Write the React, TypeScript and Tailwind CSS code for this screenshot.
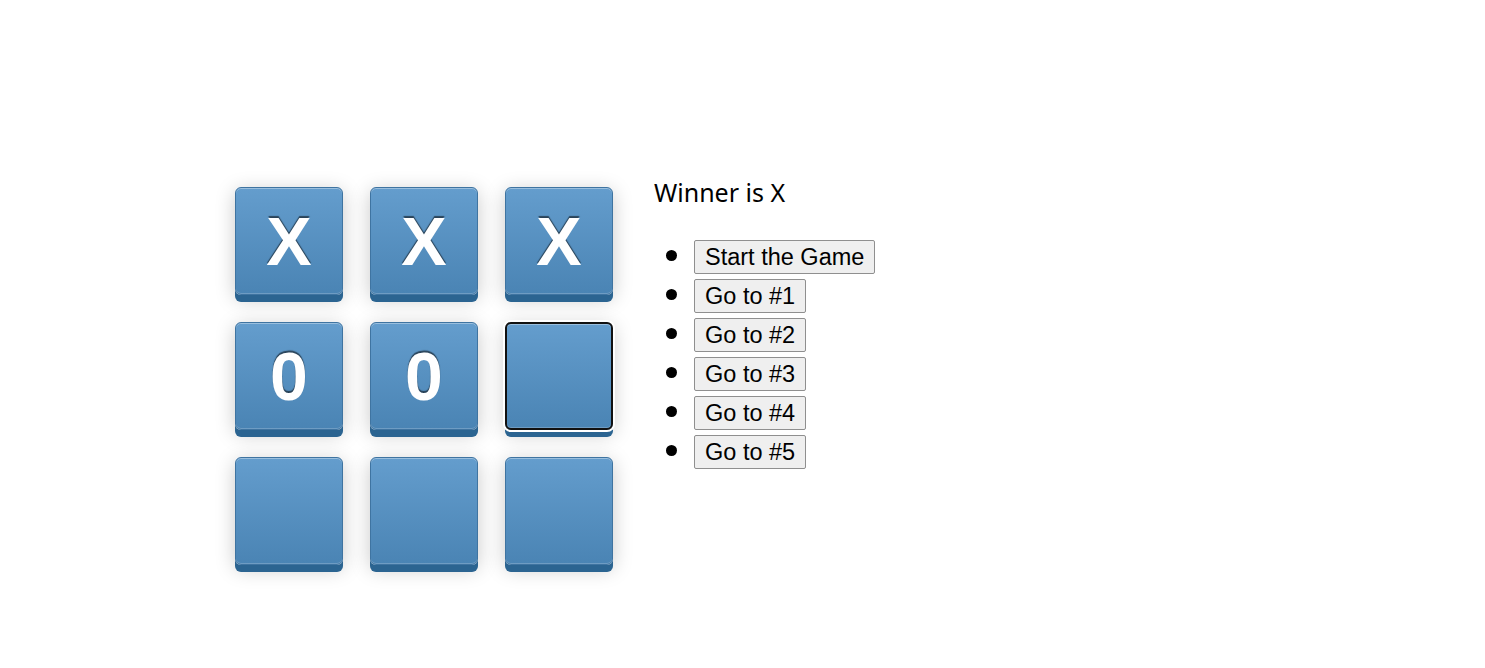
import React from "react";

const squares: (string | null)[] = ["X", "X", "X", "0", "0", null, null, null, null];
const moves = ["Start the Game", "Go to #1", "Go to #2", "Go to #3", "Go to #4", "Go to #5"];

const Square: React.FC<{ value: string | null; focused?: boolean }> = ({ value, focused }) => (
  <button
    className={
      "flex h-[108px] w-[108px] items-center justify-center rounded-[6px] bg-gradient-to-b from-[#649dcd] to-[#4a84b4] font-['Liberation_Sans',Arial,sans-serif] text-[68px] leading-none font-bold text-white [text-shadow:0_-2px_1px_rgba(0,0,0,0.55)] shadow-[inset_0_1px_0_rgba(255,255,255,0.35),inset_0_-1px_0_rgba(255,255,255,0.2),0_7px_0_#2b6491,0_4px_20px_rgba(0,0,0,0.22)]" +
      (focused ? " border-2 border-[#111] ring-2 ring-white" : " border border-[#3f74a1]")
    }
  >
    {value}
  </button>
);

export default function App() {
  return (
    <main className="flex min-h-screen items-start gap-[41px] bg-white pt-[187px] pl-[235px]">
      <div className="grid grid-cols-3 gap-x-[27px] gap-y-[27px]">
        {squares.map((v, i) => (
          <Square key={i} value={v} focused={i === 5} />
        ))}
      </div>

      <div className="-mt-[11px] font-['Noto_Sans','Open_Sans',sans-serif] text-black">
        <div className="text-[25px] leading-[32px]">Winner is X</div>
        <ul className="mt-[30px] flex list-disc flex-col gap-[5px] pl-[40px] text-[23px] marker:text-[30px]">
          {moves.map((m) => (
            <li key={m} className="h-[34px] leading-[34px]">
              <button className="h-[34px] rounded-[2px] border border-[#8f8f8f] bg-[#efefef] px-[10px] align-top font-['Liberation_Sans',Arial,sans-serif] text-[23.5px] leading-[26px] text-black">
                {m}
              </button>
            </li>
          ))}
        </ul>
      </div>
    </main>
  );
}
